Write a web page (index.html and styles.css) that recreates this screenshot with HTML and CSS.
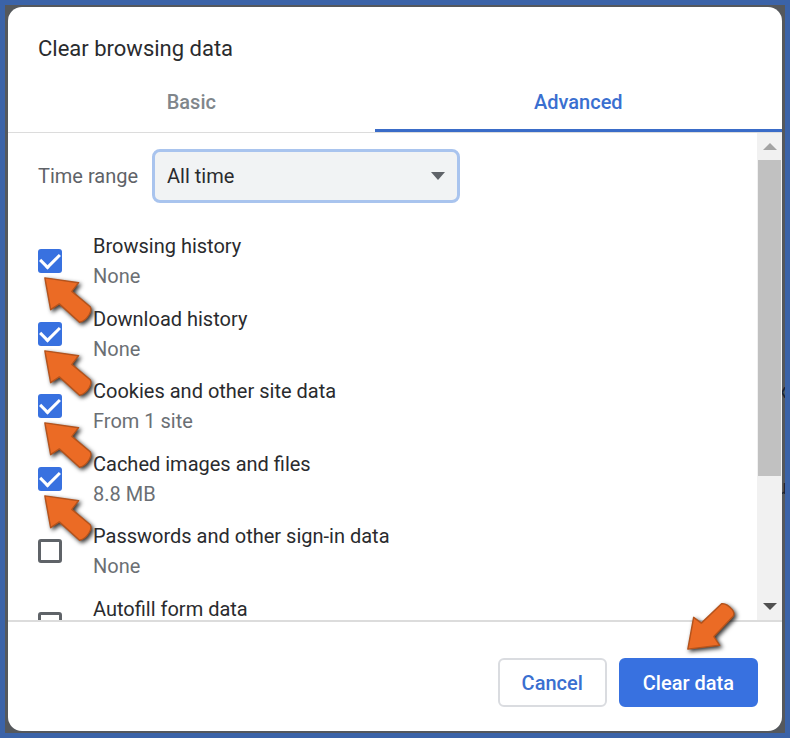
FILE: index.html
```html
<!DOCTYPE html>
<html lang="en">
<head>
  <meta charset="utf-8">
  <title>Clear browsing data</title>
  <link rel="stylesheet" href="styles.css">
</head>
<body>
  <svg class="defs" aria-hidden="true">
    <symbol id="arrow" viewBox="0 0 56 56">
      <path d="M4 4 L39 9 L32 18 L51 34 Q53 37 50 42 Q46 49 40 50 L19 31 L10 37 Z"/>
    </symbol>
  </svg>

  <span class="behind behind-top">x</span>
  <span class="behind behind-bottom">u</span>

  <main class="dialog">
    <h1>Clear browsing data</h1>

    <div class="tabs" role="tablist">
      <button class="tab" type="button" role="tab" aria-selected="false">Basic</button>
      <button class="tab active" type="button" role="tab" aria-selected="true">Advanced</button>
    </div>

    <div class="scroll-area">
      <div class="content">
        <div class="time-range">
          <label for="range">Time range</label>
          <div class="select-wrap">
            <select id="range">
              <option>All time</option>
              <option>Last hour</option>
              <option>Last 24 hours</option>
            </select>
          </div>
        </div>

        <div class="options">
          <div class="option">
            <input type="checkbox" id="browsing" checked>
            <label for="browsing">Browsing history<small>None</small></label>
            <svg class="arrow"><use href="#arrow"/></svg>
          </div>
          <div class="option">
            <input type="checkbox" id="download" checked>
            <label for="download">Download history<small>None</small></label>
            <svg class="arrow"><use href="#arrow"/></svg>
          </div>
          <div class="option">
            <input type="checkbox" id="cookies" checked>
            <label for="cookies">Cookies and other site data<small>From 1 site</small></label>
            <svg class="arrow"><use href="#arrow"/></svg>
          </div>
          <div class="option">
            <input type="checkbox" id="cache" checked>
            <label for="cache">Cached images and files<small>8.8 MB</small></label>
            <svg class="arrow"><use href="#arrow"/></svg>
          </div>
          <div class="option">
            <input type="checkbox" id="passwords">
            <label for="passwords">Passwords and other sign-in data<small>None</small></label>
          </div>
          <div class="option">
            <input type="checkbox" id="autofill">
            <label for="autofill">Autofill form data<small>&nbsp;</small></label>
          </div>
        </div>
      </div>

      <div class="scrollbar">
        <button class="scroll-up" type="button" aria-label="Scroll up"></button>
        <div class="track"><div class="thumb"></div></div>
        <button class="scroll-down" type="button" aria-label="Scroll down"></button>
      </div>
    </div>

    <div class="footer">
      <button class="btn" type="button">Cancel</button>
      <button class="btn primary" type="button">Clear data</button>
      <svg class="arrow arrow-down" viewBox="0 0 56 56">
        <path d="M4 52 L37 48 L31 39 L51 18 Q53 15 50 11 Q44 4 39 5 L18 25 L10 19 Z"/>
      </svg>
    </div>
  </main>
</body>
</html>
```

FILE: styles.css
```css
* {
  box-sizing: border-box;
}
body {
  position: relative;
  display: flex;
  height: 100vh;
  margin: 0;
  padding: 2px 3px;
  border: 5px solid #3b63a8;
  background: #55585c;
  font-family: Roboto, "Liberation Sans", sans-serif;
  font-size: 20px;
  color: #2a2b2e;
  overflow: hidden;
}
button,
select {
  font: inherit;
}
.defs {
  position: absolute;
  width: 0;
  height: 0;
}
.behind {
  position: absolute;
  right: -2px;
  color: #1d2430;
}
.behind-top {
  top: 374px;
}
.behind-bottom {
  top: 470px;
}
.dialog {
  position: relative;
  display: flex;
  flex: 1;
  flex-direction: column;
  border-radius: 14px;
  background: #fff;
}
h1 {
  margin: 0;
  padding: 27px 30px 8px;
  font-size: 22px;
  font-weight: 400;
  line-height: 30px;
}

/* tabs */
.tabs {
  display: flex;
  height: 61px;
  border-bottom: 1px solid #dcdcdc;
}
.tab {
  flex: 9;
  padding: 3px 0 0;
  border: 0;
  border-bottom: 3px solid transparent;
  background: none;
  color: #80868b;
  font-weight: 500;
}
.tab.active {
  flex: 10;
  border-bottom-color: #3a6cc8;
  border-radius: 3px 3px 0 0;
  color: #3a6fd0;
}

/* scrolling part */
.scroll-area {
  display: flex;
  flex: 1;
  min-height: 0;
  border-bottom: 2px solid #dcdcdc;
}
.content {
  flex: 1;
  padding: 16px 30px 0;
  overflow: hidden;
}
.time-range {
  display: flex;
  align-items: center;
  gap: 14px;
  color: #5f6368;
}
.select-wrap {
  position: relative;
  width: 308px;
}
.select-wrap::after {
  content: "";
  position: absolute;
  top: 23px;
  right: 15px;
  border: 7px solid transparent;
  border-top: 8px solid #5f6368;
  border-bottom: 0;
  pointer-events: none;
}
select {
  width: 100%;
  height: 54px;
  padding: 0 12px;
  border: 3px solid #a9c4ee;
  border-radius: 8px;
  background: #f1f3f4;
  color: #2a2b2e;
  appearance: none;
  outline: 0;
}
.options {
  display: grid;
  grid-template-rows: repeat(6, 1fr);
  height: 435px;
  margin-top: 22px;
}
.option {
  position: relative;
  display: flex;
  align-items: center;
  gap: 31px;
}
.option label {
  line-height: 30px;
}
.option small {
  display: block;
  color: #6b6f74;
  font-size: 20px;
}
input[type="checkbox"] {
  flex: none;
  width: 24px;
  height: 24px;
  margin: 0;
  border: 3px solid #5f6368;
  border-radius: 3px;
  appearance: none;
}
input[type="checkbox"]:checked {
  display: grid;
  place-items: center;
  border: 0;
  background: #3871e0;
}
input[type="checkbox"]:checked::after {
  content: "";
  width: 9px;
  height: 16px;
  margin-bottom: 5px;
  border: solid #fff;
  border-width: 0 3px 3px 0;
  transform: rotate(45deg);
}
.arrow {
  position: absolute;
  top: 49px;
  left: 3px;
  z-index: 1;
  width: 54px;
  height: 54px;
  fill: #eb6b25;
  stroke: #b4531c;
  stroke-width: 1.5;
  stroke-linejoin: round;
  filter: drop-shadow(2px 2px 2px rgba(0, 0, 0, 0.8));
  pointer-events: none;
}

/* scrollbar */
.scrollbar {
  display: flex;
  flex-direction: column;
  width: 25px;
  background: #f1f1f1;
}
.scroll-up,
.scroll-down {
  display: flex;
  align-items: center;
  justify-content: center;
  height: 27px;
  padding: 0;
  border: 0;
  background: none;
}
.scroll-up::before,
.scroll-down::before {
  content: "";
  border: 7px solid transparent;
}
.scroll-up::before {
  border-top: 0;
  border-bottom-color: #a3a3a3;
}
.scroll-down::before {
  border-bottom: 0;
  border-top-color: #505050;
}
.track {
  flex: 1;
  padding: 0 1px;
}
.thumb {
  height: 73%;
  background: #c1c1c1;
}

/* footer */
.footer {
  position: relative;
  display: flex;
  justify-content: flex-end;
  gap: 12px;
  padding: 36px 24px 24px;
}
.btn {
  height: 49px;
  padding: 0 22px;
  border: 2px solid #dadce0;
  border-radius: 6px;
  background: #fff;
  color: #3a6fd0;
  font-weight: 500;
}
.btn.primary {
  border-color: #3871e0;
  background: #3871e0;
  color: #fff;
}
.arrow-down {
  top: -23px;
  right: 44px;
  left: auto;
}
```
